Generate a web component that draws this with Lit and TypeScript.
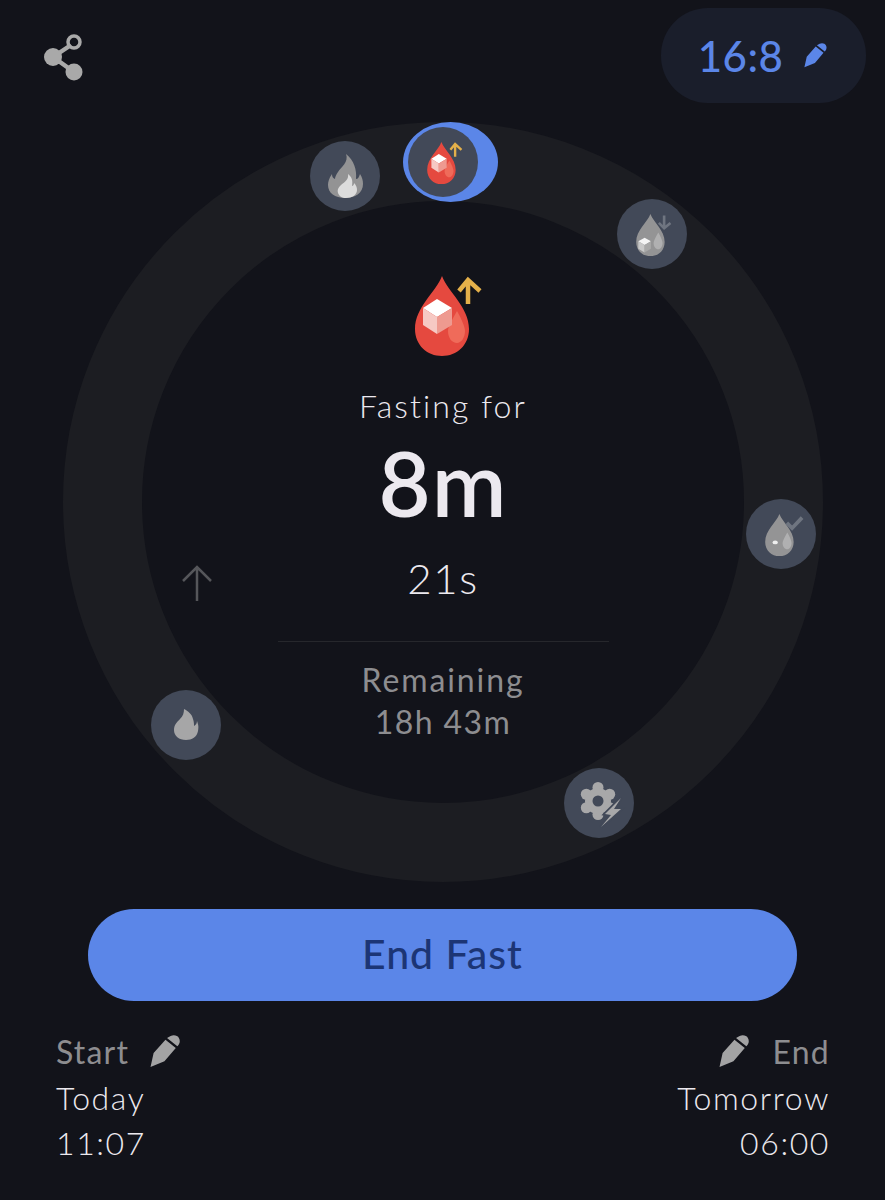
import { LitElement, html, css, svg } from "lit";
import { customElement } from "lit/decorators.js";

const GREY = { body: "#949495", small: "#b0b0b1", cubeTop: "#f4f4f4", cubeL: "#c8c8c8", cubeR: "#a8a8a8", mark: "#6f7580" };
const RED = { body: "#e5493f", small: "#ef6b5a", cubeTop: "#ffffff", cubeL: "#f6c9c4", cubeR: "#ee9a90", mark: "#e4b04a" };

const DROP = "M52 11C58 27 79 42 79 64C79 80 67 91 52 91C37 91 25 80 25 64C25 42 46 27 52 11Z";
const upArrow = (c: string) => svg`<path d="M78 39V15M69 26L78 15L90 26" fill="none" stroke=${c} stroke-width="4.5"/>`;
const downArrow = (c: string) => svg`<path d="M78 14V38M68 28L78 38L90 28" fill="none" stroke=${c} stroke-width="5"/>`;
const check = (c: string) => svg`<path d="M66 28L76 38L95 18" fill="none" stroke=${c} stroke-width="7"/>`;
const cube = (p: typeof RED) => svg`
  <path d="M47 34L62 43L47 52L33 43Z" fill=${p.cubeTop}/>
  <path d="M33 43L47 52V69L33 60Z" fill=${p.cubeL}/>
  <path d="M62 43L47 52V69L62 60Z" fill=${p.cubeR}/>`;
const lowCube = (p: typeof RED) => svg`
  <path d="M41 56L53 63L41 70L29 63Z" fill=${p.cubeTop}/>
  <path d="M29 63L41 70V84L29 77Z" fill=${p.cubeL}/>
  <path d="M53 63L41 70V84L53 77Z" fill=${p.cubeR}/>`;

const dropSvg = (p: typeof RED, mark: unknown, inner: unknown, cls: string) => html`
  <svg class=${cls} viewBox="0 0 110 100">
    <path d=${DROP} fill=${p.body}/>
    <path d="M67 46C72 55 75 62 75 66C75 73 71 78 67 78C62 78 58 73 58 66C58 62 62 55 67 46Z" fill=${p.small}/>
    ${inner}
    ${mark}
  </svg>`;

const flameBig = html`
  <svg class="ic70" viewBox="0 0 70 70">
    <path d="M36 13C39 21 31 26 28 31C26 34 25 36 25 38C23 37 22 36 22 33C19 37 18 41 18 44C18 52 25 57 35 57C45 57 53 52 53 43C53 39 52 36 50 33C49 36 48 38 46 38C47 29 44 19 36 13Z" fill="#939394"/>
    <path d="M38 33C39 38 35 41 31 44C28 47 27 49 28 52C29 55 32 57 36 57C42 57 47 54 47 49C47 46 46 44 44 42C44 44 43 45 42 45C43 40 42 36 38 33Z" fill="#dcdcdc"/>
  </svg>`;
const flameSmall = html`
  <svg class="ic70" viewBox="0 0 70 70">
    <path d="M33 19C37 21 41 24 42 29C43 32 43 34 43 36C45 35 46 33 46 31C47 34 48 36 47 41C46 47 41 50 35 50C28 50 23 46 23 40C23 35 26 32 29 29C32 26 33 23 33 19Z" fill="#a6a6a7"/>
  </svg>`;
const lobes = [0, 60, 120, 180, 240, 300];
const gearBolt = html`
  <svg class="ic70" viewBox="0 0 70 70">
    ${lobes.map((a) => {
      const r = ((a + 30) * Math.PI) / 180;
      return svg`<circle cx=${34 + 13.5 * Math.cos(r)} cy=${33 + 13.5 * Math.sin(r)} r="5.5" fill="#a8a8a9"/>`;
    })}
    <circle cx="34" cy="33" r="13" fill="#a8a8a9"/>
    <circle cx="34" cy="33" r="5.5" fill="#424958"/>
    <path d="M57 30L41 46L47 47L37 59L57 41L50 41Z" fill="#424958" stroke="#424958" stroke-width="3.500"/>
    <path d="M57 30L41 46L47 47L37 59L57 41L50 41Z" fill="#a8a8a9"/>
  </svg>`;

const pencil = (cls: string) => html`
  <svg class=${cls} viewBox="0 0 32 32">
    <path d="M0.500 31L3.500 17.500L15 4.500L25 12.500L14 25.500ZM16.500 3L20 1C23 -0.500 27 0.500 28 3C29.500 5.500 29 8 27 10.500L26.500 11Z" fill="currentColor"/>
  </svg>`;

const NODES = [
  { x: 345, y: 176, icon: flameBig },
  { x: 652, y: 234, icon: dropSvg(GREY, downArrow(GREY.mark), lowCube(GREY), "ic-drop") },
  { x: 781, y: 534, icon: dropSvg(GREY, check(GREY.mark), svg`<ellipse cx="44" cy="65" rx="5" ry="3.500" fill="#eeeeee"/>`, "ic-drop") },
  { x: 599, y: 803, icon: gearBolt },
  { x: 186, y: 725, icon: flameSmall },
];

@customElement("app-root")
export class AppRoot extends LitElement {
  static styles = css`
    :host {
      display: block;
      width: 885px;
      height: 1200px;
      overflow: hidden;
      background: #12131a;
      color: #ece9ef;
      font-family: "Lato", "Noto Sans", sans-serif;
    }
    .top {
      display: flex;
      justify-content: space-between;
      padding: 8px 19px 0 40px;
      height: 95px;
    }
    .share {
      width: 46px;
      height: 52px;
      margin-top: 24px;
      color: #a9a9a9;
    }
    .plan {
      width: 205px;
      height: 95px;
      border-radius: 47px;
      background: #1a1e2b;
      color: #5b86e8;
      display: flex;
      align-items: center;
      justify-content: center;
      gap: 21px;
      font-size: 42px;
      font-weight: 500;
      letter-spacing: 0.5px;
    }
    .plan-pen {
      width: 25px;
      height: 25px;
    }
    .dial {
      position: relative;
      width: 760px;
      height: 760px;
      margin: 19px 0 0 63px;
    }
    .ring {
      box-sizing: border-box;
      width: 760px;
      height: 760px;
      border: 79px solid #1c1d22;
      border-radius: 50%;
      display: flex;
      flex-direction: column;
      align-items: center;
      padding-top: 64px;
    }
    .main-drop {
      width: 110px;
      height: 100px;
      flex: none;
      margin-left: 4px;
    }
    .fasting {
      margin-top: 21px;
      font-size: 32px;
      line-height: 40px;
      letter-spacing: 2.1px;
      font-weight: 300;
    }
    .time {
      margin-top: 11px;
      font-size: 90px;
      line-height: 90px;
      font-weight: 600;
      letter-spacing: 1px;
    }
    .sec {
      margin-top: 27px;
      font-size: 42px;
      line-height: 48px;
      letter-spacing: 1.6px;
      font-weight: 300;
    }
    .rule {
      width: 331px;
      height: 1px;
      background: #26272c;
      margin-top: 39px;
      flex: none;
    }
    .rem {
      margin-top: 18px;
      font-size: 32px;
      line-height: 40px;
      letter-spacing: 1.9px;
      color: #8d8d90;
    }
    .rem-v {
      margin-top: 2px;
      font-size: 32px;
      line-height: 40px;
      letter-spacing: 1.4px;
      color: #8d8d90;
    }
    .node {
      position: absolute;
      width: 70px;
      height: 70px;
      border-radius: 50%;
      background: #424958;
      display: flex;
      align-items: center;
      justify-content: center;
    }
    .ic70 {
      width: 70px;
      height: 70px;
    }
    .ic-drop {
      width: 58px;
      height: 53px;
    }
    .active {
      position: absolute;
      left: 340px;
      top: 0;
      width: 95px;
      height: 80px;
      border-radius: 50%;
      background: #5b86e8;
    }
    .active .node {
      left: 5px;
      top: 5px;
    }
    .arrow {
      position: absolute;
      left: 117px;
      top: 442px;
      width: 34px;
      height: 38px;
      color: #55565a;
    }
    .cta {
      display: flex;
      align-items: center;
      justify-content: center;
      width: 709px;
      height: 88px;
      padding-bottom: 4px;
      margin: 27px 0 0 88px;
      border-radius: 46px;
      background: #5b86e8;
      color: #1c3575;
      font-size: 41px;
      font-weight: 500;
      letter-spacing: 1px;
    }
    .foot {
      display: flex;
      justify-content: space-between;
      padding: 27px 55px 0 56px;
      font-size: 32px;
      line-height: 45px;
      letter-spacing: 1.6px;
      font-weight: 300;
    }
    .col-end {
      text-align: right;
    }
    .label {
      display: flex;
      align-items: center;
      gap: 21px;
      height: 47px;
      color: #8d8d90;
      font-weight: 400;
      letter-spacing: 1.2px;
    }
    .col-end .label {
      justify-content: flex-end;
    }
    .foot-pen {
      width: 33px;
      height: 33px;
      color: #a3a3a4;
    }
  `;

  render() {
    return html`
      <div class="top">
        <svg class="share" viewBox="0 0 46 52">
          <path d="M13 25L31 13M13 25L34 40" fill="none" stroke="currentColor" stroke-width="4.500"/>
          <circle cx="34" cy="10" r="6" fill="none" stroke="currentColor" stroke-width="3.500"/>
          <circle cx="13" cy="25" r="9" fill="currentColor"/>
          <circle cx="34" cy="40" r="8.500" fill="currentColor"/>
        </svg>
        <div class="plan"><span>16:8</span>${pencil("plan-pen")}</div>
      </div>

      <div class="dial">
        <div class="ring">
          ${dropSvg(RED, upArrow(RED.mark), cube(RED), "main-drop")}
          <div class="fasting">Fasting for</div>
          <div class="time">8m</div>
          <div class="sec">21s</div>
          <div class="rule"></div>
          <div class="rem">Remaining</div>
          <div class="rem-v">18h 43m</div>
        </div>
        ${NODES.map(
          (n) => html`<div class="node" style="left:${n.x - 35 - 63}px;top:${n.y - 35 - 122}px">${n.icon}</div>`
        )}
        <div class="active">
          <div class="node">${dropSvg(RED, upArrow(RED.mark), cube(RED), "ic-drop")}</div>
        </div>
        <svg class="arrow" viewBox="0 0 34 38">
          <path d="M17 37V3M3 17L17 3L31 17" fill="none" stroke="currentColor" stroke-width="2.500"/>
        </svg>
      </div>

      <div class="cta">End Fast</div>

      <div class="foot">
        <div>
          <div class="label"><span>Start</span>${pencil("foot-pen")}</div>
          <div>Today</div>
          <div>11:07</div>
        </div>
        <div class="col-end">
          <div class="label">${pencil("foot-pen")}<span>End</span></div>
          <div>Tomorrow</div>
          <div>06:00</div>
        </div>
      </div>
    `;
  }
}
